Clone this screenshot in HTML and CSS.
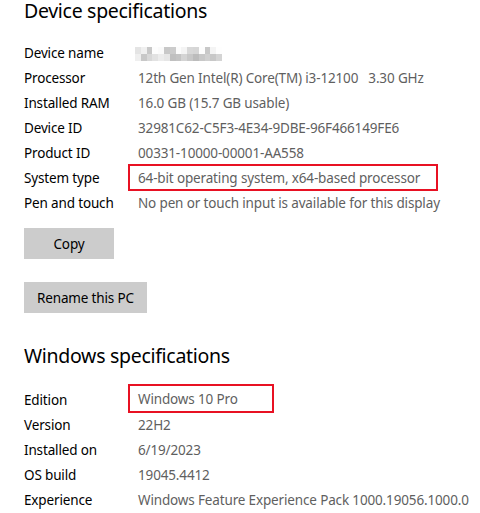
FILE: index.html
```html
<!DOCTYPE html>
<html>
<head>
<meta charset="utf-8">
<link rel="stylesheet" href="styles.css">
</head>
<body>
<div class="page">
  <h2 class="section-title">Device specifications</h2>
  <div class="specs">
    <div class="row"><span class="label">Device name</span><span class="value"><span class="mosaic">
      <i style="background:#e4e4e4"></i><i style="background:#f0f0f0"></i><i style="background:#c8c8c8"></i><i style="background:#fdfdfd"></i><i style="background:#fafafa"></i><i style="background:#c8c8c8"></i><i style="background:#cccccc"></i><i style="background:#fcfcfc"></i><i style="background:#f4f4f4"></i><i style="background:#d8d8d8"></i><i style="background:#d6d6d6"></i><i style="background:#fdfdfd"></i><i style="background:#c8c8c8"></i><i style="background:#f4f4f4"></i><i style="background:#fefefe"></i>
      <i style="background:#efefef"></i><i style="background:#c8c8c8"></i><i style="background:#d8d8d8"></i><i style="background:#e2e2e2"></i><i style="background:#ececec"></i><i style="background:#e6e6e6"></i><i style="background:#c0c0c0"></i><i style="background:#c4c4c4"></i><i style="background:#d4d4d4"></i><i style="background:#c8c8c8"></i><i style="background:#bcbcbc"></i><i style="background:#c8c8c8"></i><i style="background:#d0d0d0"></i><i style="background:#c8c8c8"></i><i style="background:#d4d4d4"></i>
    </span></span></div>
    <div class="row"><span class="label">Processor</span><span class="value">12th Gen Intel(R) Core(TM) i3-12100&nbsp;&nbsp;&nbsp;3.30 GHz</span></div>
    <div class="row"><span class="label">Installed RAM</span><span class="value">16.0 GB (15.7 GB usable)</span></div>
    <div class="row"><span class="label">Device ID</span><span class="value">32981C62-C5F3-4E34-9DBE-96F466149FE6</span></div>
    <div class="row"><span class="label">Product ID</span><span class="value">00331-10000-00001-AA558</span></div>
    <div class="row"><span class="label">System type</span><span class="value"><span class="hl hl-system">64-bit operating system, x64-based processor</span></span></div>
    <div class="row"><span class="label">Pen and touch</span><span class="value">No pen or touch input is available for this display</span></div>
  </div>
  <div class="actions">
    <button class="btn btn-copy">Copy</button>
    <button class="btn">Rename this PC</button>
  </div>
  <h2 class="section-title second">Windows specifications</h2>
  <div class="specs specs-win">
    <div class="row"><span class="label">Edition</span><span class="value"><span class="hl hl-edition">Windows 10 Pro</span></span></div>
    <div class="row"><span class="label">Version</span><span class="value">22H2</span></div>
    <div class="row"><span class="label">Installed on</span><span class="value">6/19/2023</span></div>
    <div class="row"><span class="label">OS build</span><span class="value">19045.4412</span></div>
    <div class="row"><span class="label">Experience</span><span class="value">Windows Feature Experience Pack 1000.19056.1000.0</span></div>
  </div>
</div>
</body>
</html>
```
FILE: styles.css
```css
html, body {
  margin: 0;
  padding: 0;
  background: #ffffff;
}
body {
  font-family: "Noto Sans", "Open Sans", sans-serif;
  color: #000;
  overflow: hidden;
}
.page {
  padding-left: 24px;
}
.section-title {
  margin: 0;
  font-size: 19.5px;
  letter-spacing: -0.3px;
  font-weight: 400;
  line-height: 22px;
  color: #000;
}
.section-title.second {
  margin-top: 32px;
}
.specs {
  margin-top: 19px;
}
.specs-win {
  margin-top: 21px;
}
.row {
  display: grid;
  grid-template-columns: 114px 1fr;
  grid-template-rows: 25px;
  height: 25px;
  align-items: center;
  font-size: 13.5px;
  letter-spacing: -0.15px;
  line-height: 25px;
  white-space: nowrap;
}
.label {
  color: #000;
}
.value {
  color: #5f5f5f;
  display: flex;
  align-items: center;
}
.mosaic {
  display: grid;
  grid-template-columns: repeat(15, 5.8px);
  grid-template-rows: 7px 7px;
  margin-left: -3px;
  margin-top: 0;
}
.mosaic i {
  display: block;
}
.hl {
  display: inline-block;
  border: 2px solid #e81123;
  margin-left: -10px;
  padding-left: 8px;
}
.hl-system {
  line-height: 22px;
  padding-top: 1px;
  padding-right: 16px;
}
.row:has(.hl-system) .value {
  align-self: start;
  margin-top: -2px;
}
.hl-edition {
  line-height: 23px;
  padding-top: 2px;
  padding-right: 34px;
}
.row:has(.hl-edition) .value {
  align-self: start;
  margin-top: -4px;
}
.actions {
  display: flex;
  flex-direction: column;
  align-items: flex-start;
  gap: 23px;
  margin-top: 12px;
}
.btn {
  height: 31px;
  min-width: 90px;
  padding: 0 13px;
  border: none;
  background: #cccccc;
  font-family: inherit;
  font-size: 13.5px;
  letter-spacing: -0.15px;
  color: #000;
}
```
